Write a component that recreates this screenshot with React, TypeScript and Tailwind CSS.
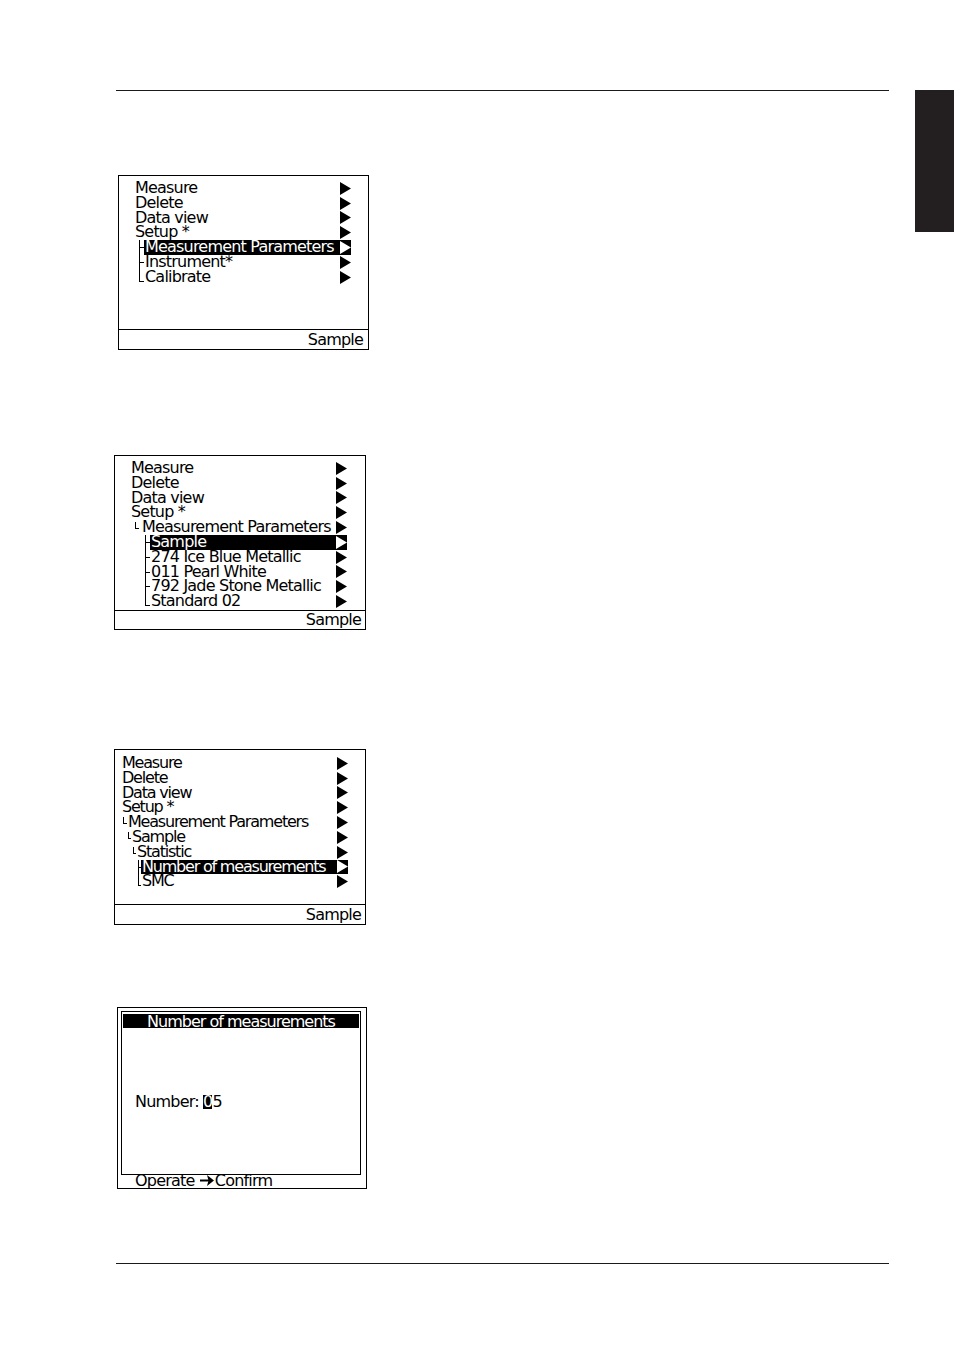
import clsx from 'clsx';

type Mark = 'none' | 'tee' | 'end' | 'small';

interface MenuRow {
  label: string;
  pad: string; // width class for the indent area, written out in full
  vx?: number; // x of the tree line inside the indent area
  mark?: Mark;
  hl?: boolean;
}

const font = { fontFamily: '"DejaVu Sans", "Liberation Sans", sans-serif' };

// small tree connector drawn in the indent column
const TreeMark = ({ kind, vx, w }: { kind: Mark; vx: number; w: number }) => {
  if (kind === 'none') return null;
  const x = vx + 0.5;
  return (
    <svg width={w} height={15} className="absolute left-0 top-0" shapeRendering="crispEdges">
      {kind === 'tee' && (
        <>
          <line x1={x} y1={0} x2={x} y2={15} stroke="black" strokeWidth={1} />
          <line x1={x} y1={7.5} x2={w} y2={7.5} stroke="black" strokeWidth={1} />
        </>
      )}
      {kind === 'end' && (
        <>
          <line x1={x} y1={0} x2={x} y2={11.5} stroke="black" strokeWidth={1} />
          <line x1={x} y1={11.5} x2={w} y2={11.5} stroke="black" strokeWidth={1} />
        </>
      )}
      {kind === 'small' && (
        <>
          <line x1={x} y1={2} x2={x} y2={8.5} stroke="black" strokeWidth={1} />
          <line x1={x} y1={8.5} x2={x + 3} y2={8.5} stroke="black" strokeWidth={1} />
        </>
      )}
    </svg>
  );
};

const Tri = ({ white }: { white?: boolean }) => (
  <svg width={11} height={13} viewBox="0 0 11 13" className="shrink-0">
    <polygon points="0,0 11,6.5 0,13" fill={white ? 'white' : 'black'} />
  </svg>
);

const padPx: Record<string, number> = {
  'w-0': 0,
  'w-[6px]': 6,
  'w-[7px]': 7,
  'w-[10px]': 10,
  'w-[11px]': 11,
  'w-[15px]': 15,
  'w-[20px]': 20,
};

const Row = ({ row }: { row: MenuRow }) => (
  <div className="flex h-[14.8px] items-center">
    <div className={clsx('relative h-full shrink-0', row.pad)}>
      <TreeMark kind={row.mark ?? 'none'} vx={row.vx ?? 0} w={padPx[row.pad]} />
    </div>
    <div
      className={clsx(
        'flex h-full flex-1 items-center justify-between',
        row.hl && 'bg-black text-white'
      )}
    >
      <span className="whitespace-nowrap pl-px">{row.label}</span>
      <Tri white={row.hl} />
    </div>
  </div>
);

const screenOne: MenuRow[] = [
  { label: 'Measure', pad: 'w-0' },
  { label: 'Delete', pad: 'w-0' },
  { label: 'Data view', pad: 'w-0' },
  { label: 'Setup *', pad: 'w-0' },
  { label: 'Measurement Parameters', pad: 'w-[10px]', vx: 5, mark: 'tee', hl: true },
  { label: 'Instrument*', pad: 'w-[10px]', vx: 5, mark: 'tee' },
  { label: 'Calibrate', pad: 'w-[10px]', vx: 5, mark: 'end' },
];

const screenTwo: MenuRow[] = [
  { label: 'Measure', pad: 'w-0' },
  { label: 'Delete', pad: 'w-0' },
  { label: 'Data view', pad: 'w-0' },
  { label: 'Setup *', pad: 'w-0' },
  { label: 'Measurement Parameters', pad: 'w-[11px]', vx: 5, mark: 'small' },
  { label: 'Sample', pad: 'w-[20px]', vx: 15, mark: 'tee', hl: true },
  { label: '274 Ice Blue Metallic', pad: 'w-[20px]', vx: 15, mark: 'tee' },
  { label: '011 Pearl White', pad: 'w-[20px]', vx: 15, mark: 'tee' },
  { label: '792 Jade Stone Metallic', pad: 'w-[20px]', vx: 15, mark: 'tee' },
  { label: 'Standard 02', pad: 'w-[20px]', vx: 15, mark: 'end' },
];

const screenThree: MenuRow[] = [
  { label: 'Measure', pad: 'w-0' },
  { label: 'Delete', pad: 'w-0' },
  { label: 'Data view', pad: 'w-0' },
  { label: 'Setup *', pad: 'w-0' },
  { label: 'Measurement Parameters', pad: 'w-[6px]', vx: 2, mark: 'small' },
  { label: 'Sample', pad: 'w-[10px]', vx: 7, mark: 'small' },
  { label: 'Statistic', pad: 'w-[15px]', vx: 12, mark: 'small' },
  { label: 'Number of measurements', pad: 'w-[20px]', vx: 17, mark: 'tee', hl: true },
  { label: 'SMC', pad: 'w-[20px]', vx: 17, mark: 'end' },
];

const ArrowRight = () => (
  <svg width={14} height={11} viewBox="0 0 14 11" className="mx-px inline-block">
    <line x1={0} y1={5.5} x2={9} y2={5.5} stroke="black" strokeWidth={2} />
    <polygon points="7,0 14,5.5 7,11 8.5,5.5" fill="black" />
  </svg>
);

const App = () => {
  return (
    <div
      className="flex h-[1354px] w-[954px] bg-white text-[16px] tracking-[-0.8px] text-black"
      style={font}
    >
      <div className="flex w-[915px] flex-col pt-[90px]">
        {/* top rule */}
        <div className="ml-[116px] h-px w-[773px] bg-[#1a1a1a]" />

        {/* screen 1 */}
        <div className="ml-[118px] mt-[84px] flex h-[175px] w-[251px] flex-col border border-black">
          <div className="flex-1 pl-[15px] pr-[17px] pt-[5px] leading-[14.8px]">
            {screenOne.map((r) => (
              <Row key={r.label} row={r} />
            ))}
          </div>
          <div className="h-[20px] border-t border-black pr-[5px] text-right leading-[19px]">Sample</div>
        </div>

        {/* screen 2 */}
        <div className="ml-[114px] mt-[105px] flex h-[175px] w-[252px] flex-col border border-black">
          <div className="flex-1 pl-[15px] pr-[18px] pt-[5px] leading-[14.8px]">
            {screenTwo.map((r) => (
              <Row key={r.label} row={r} />
            ))}
          </div>
          <div className="h-[19px] border-t border-black pr-[4px] text-right leading-[18px]">Sample</div>
        </div>

        {/* screen 3 */}
        <div className="ml-[114px] mt-[119px] flex h-[176px] w-[252px] flex-col border border-black">
          <div className="flex-1 pl-[6px] pr-[17px] pt-[6px] leading-[14.8px] tracking-[-1.2px]">
            {screenThree.map((r) => (
              <Row key={r.label} row={r} />
            ))}
          </div>
          <div className="h-[20px] border-t border-black pr-[4px] text-right leading-[19px]">Sample</div>
        </div>

        {/* screen 4 */}
        <div className="ml-[117px] mt-[82px] flex h-[182px] w-[250px] flex-col overflow-hidden border border-black px-[3px] pt-[3px]">
          <div className="flex h-[165px] w-[240px] flex-col border border-black">
            <div className="mx-px mt-[2px] h-[14px] bg-black text-center leading-[15px] tracking-[-1px] text-white">
              Number of measurements
            </div>
            <div className="mt-[66px] flex h-[15px] items-center pl-[13px]">
              <span>Number:&nbsp;</span>
              <span className="bg-black leading-[14px] text-white">0</span>
              <span>5</span>
            </div>
          </div>
          <div className="-mt-[2px] flex items-center pl-[14px] leading-[15px]">
            <span>Operate&nbsp;</span>
            <ArrowRight />
            <span>Confirm</span>
          </div>
        </div>

        {/* bottom rule */}
        <div className="ml-[116px] mt-[74px] h-px w-[773px] bg-[#1a1a1a]" />
      </div>

      {/* thumb tab */}
      <div className="mt-[90px] h-[142px] w-[39px] bg-[#231f20]" />
    </div>
  );
};

export default App;
